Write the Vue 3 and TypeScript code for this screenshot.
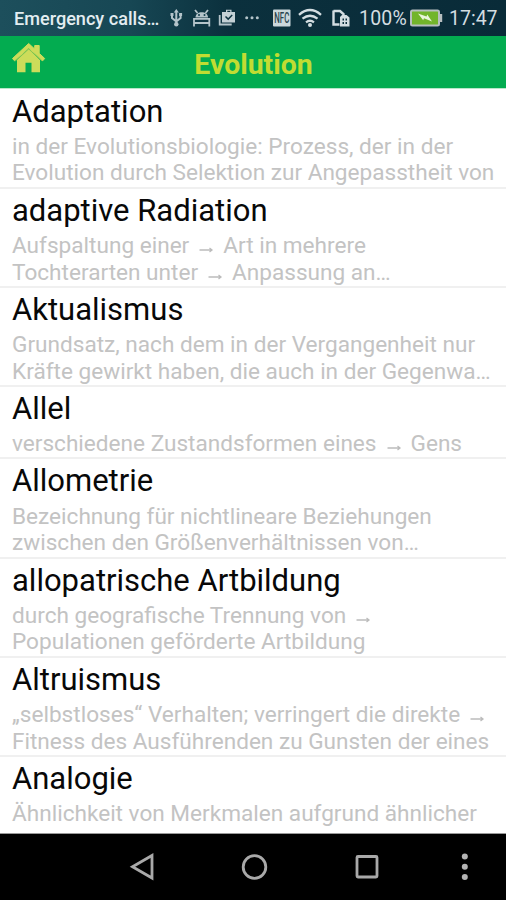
<script setup lang="ts">
interface Entry {
  term: string
  lines: string[]
}

const entries: Entry[] = [
  { term: 'Adaptation', lines: ['in der Evolutionsbiologie: Prozess, der in der', 'Evolution durch Selektion zur Angepasstheit von'] },
  { term: 'adaptive Radiation', lines: ['Aufspaltung einer → Art in mehrere', 'Tochterarten unter → Anpassung an…'] },
  { term: 'Aktualismus', lines: ['Grundsatz, nach dem in der Vergangenheit nur', 'Kräfte gewirkt haben, die auch in der Gegenwa…'] },
  { term: 'Allel', lines: ['verschiedene Zustandsformen eines → Gens'] },
  { term: 'Allometrie', lines: ['Bezeichnung für nichtlineare Beziehungen', 'zwischen den Größenverhältnissen von…'] },
  { term: 'allopatrische Artbildung', lines: ['durch geografische Trennung von →', 'Populationen geförderte Artbildung'] },
  { term: 'Altruismus', lines: ['„selbstloses“ Verhalten; verringert die direkte →', 'Fitness des Ausführenden zu Gunsten der eines'] },
  { term: 'Analogie', lines: ['Ähnlichkeit von Merkmalen aufgrund ähnlicher'] },
]

// Splits a line so that the reference arrows can be drawn smaller than the text
const parts = (line: string): string[] => line.split(/ ?(→) ?/).filter((p) => p !== '')
</script>

<template>
  <div class="screen">
    <div class="status">
      <span class="carrier">Emergency calls…</span>
      <svg class="status-icons" width="190" height="36" viewBox="166 0 190 36">
        <g fill="none" stroke="#b4c4ca" stroke-width="2">
          <path d="M176.300 12v12M172 14.500v3.500l4.300 3.500M180.600 14.500v3.500l-4.300 3.500" />
        </g>
        <g fill="#b4c4ca">
          <path d="M176.300 9l2.500 3.500h-5zM170.500 13h3v3h-3zM179.100 13h3v3h-3z" />
          <circle cx="176.300" cy="24.300" r="2.200" />
        </g>
        <g fill="none" stroke="#b4c4ca" stroke-width="1.800">
          <path d="M195 10l2.500 3M208 10l-2.500 3M194 18.800h15.500M194.500 23h14.500M194 18v8.500M209.300 18v8.500" />
          <path d="M219.700 15v9.500h12" />
        </g>
        <path d="M195.500 17.500c0-7 12.500-7 12.500 0z" fill="#b4c4ca" />
        <circle cx="199" cy="15" r="1" fill="#123e4b" />
        <circle cx="204.500" cy="15" r="1" fill="#123e4b" />
        <path fill="#c3d0d5" fill-rule="evenodd" d="M222 12h4v-2.300h5.500V12h3.500v10.500h-13zM227.300 12h3v-1.200h-3zM225 17l3.200 3.200 4.500-4.700-1-1-3.500 3.500-2.200-2z" />
        <g fill="#b4c4ca">
          <circle cx="246.700" cy="17.800" r="1.500" /><circle cx="252" cy="17.800" r="1.500" /><circle cx="257.300" cy="17.800" r="1.500" />
        </g>
        <rect x="273" y="9.500" width="17.500" height="17" rx="1" fill="#cbd7db" />
        <text class="nfc" x="281.800" y="23" text-anchor="middle" textLength="15" lengthAdjust="spacingAndGlyphs">NFC</text>
        <g fill="none" stroke="#d3dde1" stroke-width="2.300">
          <path d="M299 14.800q11-9.500 22 0M302.500 18.700q7.500-6 15 0M306 22.300q4-3 8 0" />
        </g>
        <circle cx="310" cy="25" r="2" fill="#d3dde1" />
        <path d="M333.500 11h6.500l3.500 3v2M333.500 10.500v14h6" fill="none" stroke="#d3dde1" stroke-width="2.400" />
        <path fill="#d3dde1" fill-rule="evenodd" d="M342 15h4.500l3 2.500V26.500H340V17zM342.500 18.500v2h1.500v-2zM345.500 18.500v2h1.500v-2zM342.500 22v2h1.500v-2zM345.500 22v2h1.500v-2z" />
      </svg>
      <span class="percent">100%</span>
      <svg class="battery" width="34" height="18" viewBox="410 9 34 18">
        <rect x="411" y="10.500" width="28" height="15" rx="1.500" fill="#72b52b" stroke="#b7bfc0" stroke-width="2" />
        <path d="M440 14h2.200v8H440z" fill="#b7bfc0" />
        <path d="M418 13.500l8.500 3 .8-2 4.700 7-8-3.300-.8 2z" fill="#eaf6dc" />
      </svg>
      <span class="clock">17:47</span>
    </div>

    <header class="header">
      <svg class="home" width="36" height="34" viewBox="11 41 36 34">
        <path d="M12.500 58.500L28.700 43.500l6 5.500v-3.500h4.500v7.800l5.500 5.200-2 2.300L28.700 48 14.500 60.800z" fill="#cddc5a" stroke="#cddc5a" stroke-width="1" stroke-linejoin="round" />
        <path d="M28.700 49L40 60v12.300h-8.500v-9.500h-6v9.500H17V60z" fill="#cddc5a" />
        <path d="M15.500 60.800L28.700 49 42 60.800" fill="none" stroke="#9fca50" stroke-width=".8" />
      </svg>
      <h1 class="title">Evolution</h1>
    </header>

    <main class="list">
      <section v-for="entry in entries" :key="entry.term" class="entry">
        <h2 class="term">{{ entry.term }}</h2>
        <p v-for="line in entry.lines" :key="line" class="line"><template v-for="(part, i) in parts(line)" :key="i"><svg v-if="part === '→'" class="arrow" width="34" height="10" viewBox="0 0 34 10"><path d="M10.500 5H23M20.500 3L23 5l-2.500 2" /></svg><template v-else>{{ part }}</template></template></p>
      </section>
    </main>

    <nav class="nav">
      <svg width="506" height="66" viewBox="0 834 506 66" fill="none" stroke="#a9a9a9" stroke-width="2.800">
        <path d="M152 855.500v22.500l-19.500-11.200z" />
        <circle cx="254.500" cy="867" r="11.300" />
        <rect x="357" y="856.500" width="20" height="20.500" rx="1" />
        <g fill="#b4b4b4" stroke="none">
          <circle cx="464.800" cy="856.600" r="3" /><circle cx="464.800" cy="866.700" r="3" /><circle cx="464.800" cy="876.900" r="3" />
        </g>
      </svg>
    </nav>
  </div>
</template>

<style>
body {
  margin: 0;
}
</style>

<style scoped>
.screen {
  width: 506px;
  height: 900px;
  overflow: hidden;
  display: flex;
  flex-direction: column;
  background: #fff;
  font-family: Roboto, "Liberation Sans", sans-serif;
}

.status {
  flex: none;
  height: 36px;
  display: flex;
  align-items: center;
  background: linear-gradient(90deg, #1d4f5c 0, #174754 130px, #0b303d 230px, #092b38 100%);
  color: #d3dde1;
  white-space: nowrap;
}

.carrier {
  width: 152px;
  padding-left: 14px;
  font-size: 18.100px;
  font-weight: 500;
  line-height: 39px;
  color: #e3edf1;
}

.status-icons {
  flex: none;
}

.nfc {
  font-size: 15px;
  font-weight: 500;
  fill: #29454f;
}

.percent {
  width: 51px;
  padding-left: 3px;
  font-size: 19.500px;
  letter-spacing: 0.200px;
  line-height: 39px;
}

.battery {
  flex: none;
}

.clock {
  padding-left: 5px;
  padding-top: 2px;
  font-size: 19.500px;
  line-height: 38px;
}

.header {
  flex: none;
  height: 52px;
  display: grid;
  grid-template-columns: 36px 1fr 36px;
  padding: 0 11px;
  background: #03ac50;
  border-bottom: 1px solid #b9e8c9;
}

.home {
  margin-top: 5px;
}

.title {
  margin: 0;
  padding: 3px 0 0 1px;
  text-align: center;
  font-size: 28.400px;
  line-height: 52px;
  height: 49px;
  font-weight: 700;
  color: #c1dc32;
}

.list {
  box-sizing: border-box;
  flex: none;
  height: 745px;
  padding-top: 0.500px;
  overflow: hidden;
  border-bottom: 1px solid #999;
}

.entry {
  box-sizing: border-box;
  padding: 5px 0 0 12px;
  border-bottom: 2px solid #f0f0f0;
}

.entry:last-child {
  border-bottom: 0;
}

.term {
  margin: 0 0 5.600px;
  font-size: 31px;
  line-height: 34px;
  font-weight: 400;
  color: #080808;
  white-space: nowrap;
}

.line {
  margin: 0;
  height: 26.400px;
  font-size: 22.600px;
  line-height: 26.400px;
  color: #c3c3c3;
  white-space: nowrap;
}

.line:last-child {
  height: 26.100px;
}

.arrow {
  vertical-align: -2px;
  fill: none;
  stroke: #bcbcbc;
  stroke-width: 1.300;
}

.nav {
  flex: 1;
  background: #000;
}
</style>
